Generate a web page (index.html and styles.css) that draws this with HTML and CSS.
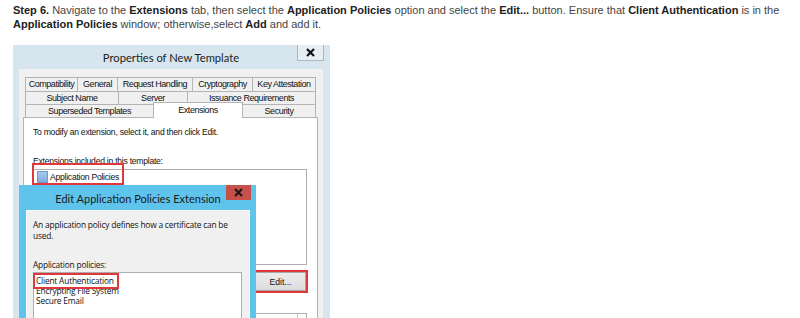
FILE: index.html
```html
<!DOCTYPE html>
<html>
<head>
<meta charset="utf-8">
<link rel="stylesheet" href="styles.css">
</head>
<body>
<p class="step"><b>Step 6.</b> Navigate to the <b>Extensions</b> tab, then select the <b>Application Policies</b> option and select the <b>Edit...</b> button. Ensure that <b>Client Authentication</b> is in the <b>Application Policies</b> window; otherwise,select <b>Add</b> and add it.</p>
<div class="shot">
  <div class="win">
    <div class="win-title">
      <span class="title-text">Properties of New Template</span>
      <span class="win-close"><svg width="9" height="9" viewBox="0 0 9 9"><path d="M1 1 L8 8 M8 1 L1 8" stroke="#111" stroke-width="2.2" fill="none"/></svg></span>
    </div>
    <div class="win-body">
      <div class="tabs">
        <div class="tabrow r1">
          <span class="tab">Compatibility</span>
          <span class="tab">General</span>
          <span class="tab">Request Handling</span>
          <span class="tab">Cryptography</span>
          <span class="tab">Key Attestation</span>
        </div>
        <div class="tabrow r2">
          <span class="tab">Subject Name</span>
          <span class="tab">Server</span>
          <span class="tab">Issuance Requirements</span>
        </div>
        <div class="tabrow r3">
          <span class="tab">Superseded Templates</span>
          <span class="tab sel">Extensions</span>
          <span class="tab">Security</span>
        </div>
      </div>
      <div class="panel">
        <p class="ui-text intro">To modify an extension, select it, and then click Edit.</p>
        <p class="ui-text lbl">Extensions included in this template:</p>
        <div class="listbox ext-list">
          <div class="item"><span class="ext-ico"></span>Application Policies</div>
        </div>
        <div class="btn-row">
          <span class="hl-btn"><button class="btn">Edit...</button></span>
        </div>
        <div class="combo"><span class="combo-arrow"></span></div>
      </div>
    </div>
  </div>

  <div class="dlg">
    <div class="dlg-title">
      <span class="dlg-title-text">Edit Application Policies Extension</span>
      <span class="dlg-close"><svg width="9" height="9" viewBox="0 0 9 9"><path d="M1 1 L8 8 M8 1 L1 8" stroke="#1a1a1a" stroke-width="2.2" fill="none"/></svg></span>
    </div>
    <div class="dlg-body">
      <p class="ui-text2 desc">An application policy defines how a certificate can be used.</p>
      <p class="ui-text2 pol-lbl">Application policies:</p>
      <div class="listbox pol-list">
        <div class="pitem hl2">Client Authentication</div>
        <div class="pitem">Encrypting File System</div>
        <div class="pitem">Secure Email</div>
      </div>
    </div>
  </div>
</div>
</body>
</html>
```

FILE: styles.css
```css
* { box-sizing: border-box; }

body {
  margin: 0;
  padding: 0 13px;
  background: #fff;
  font-family: "Liberation Sans", Arial, sans-serif;
  overflow: hidden;
}

.step {
  margin: 3px 0 0;
  font-size: 11px;
  line-height: 14px;
  color: #444;
}
.step b { color: #222; }

.shot {
  position: relative;
  margin-top: 14px;
  width: 317px;
}

/* main window */
.win {
  width: 317px;
  height: 320px;
  background: #d6e5ee;
  padding: 0 7px 0 6px;
}

.win-title {
  height: 24px;
  display: grid;
  grid-template-columns: 1fr auto 1fr;
  align-items: center;
}
.title-text {
  grid-column: 1 / 4;
  grid-row: 1;
  justify-self: center;
  font-family: Lato, "Open Sans", sans-serif;
  font-size: 11.2px;
  color: #222;
  margin-top: 1px;
}
.win-close {
  grid-column: 3;
  grid-row: 1;
  justify-self: end;
  align-self: start;
  width: 27px;
  height: 16px;
  background: #e6eef3;
  border: 1px solid #a9b7c0;
  border-top: none;
  display: flex;
  align-items: center;
  justify-content: center;
  margin-right: -1px;
}

.win-body {
  background: #f0f0f0;
  height: 296px;
  padding: 8px 5px 0 4px;
}

.tabs {
  margin: 0 2px;
  display: flex;
  flex-direction: column;
}
.tabrow {
  display: grid;
  height: 13px;
}
.tabrow.r1 { grid-template-columns: 53px 40px 75px 60px 63px; height: 14px; }
.tabrow.r2 { grid-template-columns: 94px 69px 128px; }
.tabrow.r3 { grid-template-columns: 129px 89px 73px; }

.tab {
  font-size: 9px;
  letter-spacing: -0.45px;
  color: #111;
  background: #f0f0f0;
  border: 1px solid #b4b4b4;
  border-bottom: none;
  margin-left: -1px;
  display: flex;
  align-items: center;
  justify-content: center;
  line-height: 1;
  white-space: nowrap;
  overflow: hidden;
}
.tab:first-child { margin-left: 0; }
.tab.sel {
  background: #fff;
  margin-top: -2px;
  margin-bottom: -1px;
  position: relative;
  z-index: 1;
  align-items: flex-start;
  padding-top: 3px;
}

.panel {
  background: #fff;
  border: 1px solid #b4b4b4;
  height: 210px;
  padding: 9px 10px 0 9px;
}

.ui-text {
  margin: 0;
  font-size: 8.6px;
  letter-spacing: -0.25px;
  color: #111;
  line-height: 11px;
}
.lbl { margin-top: 18px; }

.listbox {
  background: #fff;
  border: 1px solid #adadad;
}
.ext-list {
  height: 96px;
  margin-top: 2px;
  padding: 0 3px;
}
.item {
  position: relative;
  display: flex;
  width: fit-content;
  align-items: center;
  gap: 2px;
  font-size: 8.6px;
  letter-spacing: -0.25px;
  color: #111;
  height: 13px;
}
.item::after {
  content: "";
  position: absolute;
  top: -7px;
  bottom: -2px;
  left: -5px;
  right: -5px;
  border: 2px solid #e0383a;
}
.ext-ico {
  width: 11px;
  height: 12px;
  background: linear-gradient(#a9c8ef, #7fa9e0);
  border: 1px solid #6e98d2;
}

.btn-row {
  display: flex;
  justify-content: flex-end;
  margin-top: 7px;
  padding-right: 1px;
}
.hl-btn {
  border: 2px solid #e0383a;
  margin: -2px -2px 0 0;
}
.btn {
  width: 51px;
  height: 19px;
  background: linear-gradient(#ececec, #dcdcdc);
  border: 1px solid #a8a8a8;
  font-family: "Liberation Sans", Arial, sans-serif;
  font-size: 8.6px;
  color: #111;
  padding: 0;
  display: block;
}

.combo {
  margin: 20px 0 0 222px;
  width: 52px;
  height: 14px;
  border: 1px solid #adadad;
  border-bottom: none;
  display: flex;
  justify-content: flex-end;
}
.combo-arrow {
  width: 9px;
  border-left: 1px solid #c8c8c8;
}

/* overlapping dialog */
.dlg {
  position: absolute;
  left: 6px;
  top: 140px;
  width: 237px;
  height: 150px;
  background: #5ec4ec;
  padding: 0 6px 0 7px;
}
.dlg-title {
  height: 25px;
  display: grid;
  grid-template-columns: 1fr auto 1fr;
  align-items: center;
}
.dlg-title-text {
  grid-column: 1 / 4;
  grid-row: 1;
  justify-self: center;
  font-family: Lato, "Open Sans", sans-serif;
  font-size: 11px;
  color: #1a1a1a;
  margin-top: 2px;
}
.dlg-close {
  grid-column: 3;
  grid-row: 1;
  justify-self: end;
  align-self: start;
  width: 25px;
  height: 15px;
  background: #c7504b;
  display: flex;
  align-items: center;
  justify-content: center;
  margin-right: -1px;
}
.dlg-body {
  background: #f0f0f0;
  border: 1px solid #fafafa;
  height: 125px;
  padding: 8px 7px 0 6px;
}
.ui-text2 {
  margin: 0;
  font-family: "Open Sans", "Noto Sans", sans-serif;
  font-size: 8.4px;
  letter-spacing: -0.2px;
  color: #111;
  line-height: 11px;
}
.desc { width: 200px; }
.pol-lbl { margin-top: 18px; }
.pol-list {
  margin-top: 2px;
  width: 209px;
  height: 60px;
  padding: 3px 2px;
}
.pitem {
  font-family: "Open Sans", "Noto Sans", sans-serif;
  font-size: 8.4px;
  letter-spacing: -0.2px;
  color: #111;
  line-height: 10px;
  white-space: nowrap;
}
.hl2 {
  width: fit-content;
  outline: 2px solid #e0383a;
  outline-offset: 1px;
  padding-right: 2px;
}
```
